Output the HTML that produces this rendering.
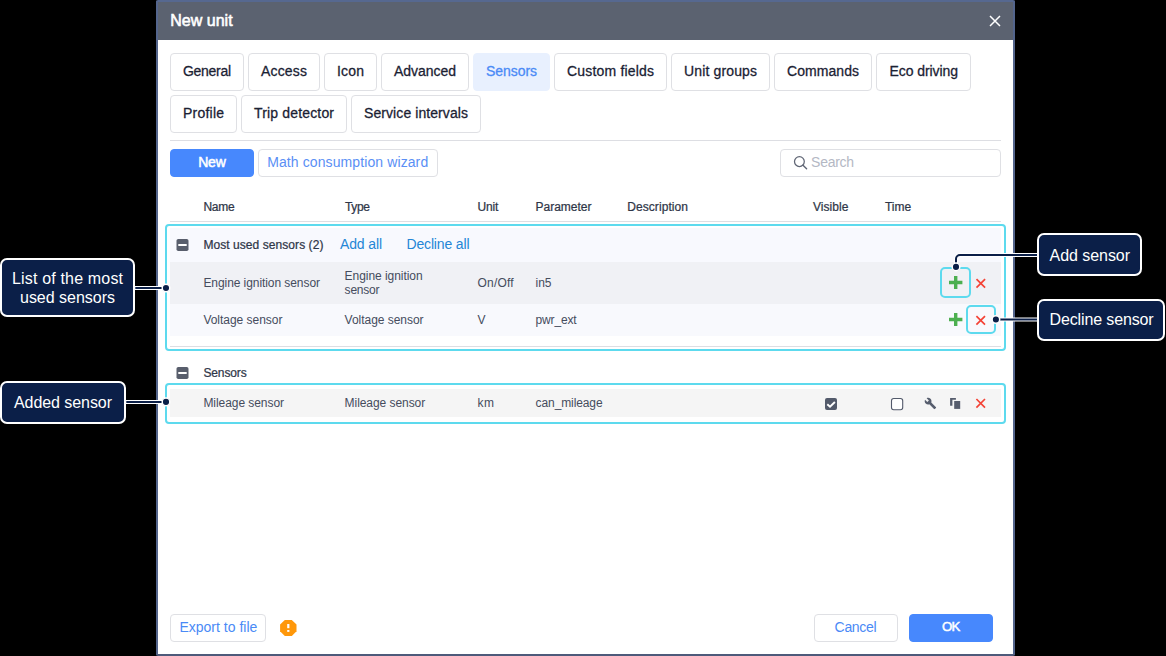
<!DOCTYPE html>
<html><head><meta charset="utf-8"><title>New unit</title>
<style>
html,body{margin:0;padding:0;}
body{width:1166px;height:656px;background:#000;overflow:hidden;position:relative;font-family:"Liberation Sans",sans-serif;}
.a{position:absolute;box-sizing:border-box;}
.t{position:absolute;white-space:nowrap;line-height:20px;font-family:"Liberation Sans",sans-serif;}
#dlg{left:156px;top:0;width:859px;height:656px;border:2px solid #54658c;border-top-color:#566890;border-bottom-color:#4d5a7a;border-radius:2px;background:#fff;}
#hdr{left:158px;top:2px;width:855px;height:38px;background:#5b6270;}
.tab{border:1px solid #dfe0e4;border-radius:4px;background:#fff;height:38px;}
.tab.act{border-color:#e8f0fe;background:#e8f0fe;}
.ln{height:1px;background:#dddee3;left:170px;width:831px;}
.btn{border:1px solid #dfe0e4;border-radius:4px;background:#fff;height:28px;}
.btn.pri{border-color:#4788fd;background:#4788fd;}
.cy{border:2px solid #5ddaee;border-radius:4px;}
.row{left:170px;width:831px;}
.co{background:#0b1f48;border:2px solid #fff;border-radius:7px;}
svg{position:absolute;left:0;top:0;}

</style></head>
<body>
<div class="a" id="dlg"></div>
<div class="a" id="hdr"></div>
<!-- tabs row 1 -->
<div class="a tab" style="left:170px;top:53px;width:74px"></div>
<div class="a tab" style="left:248px;top:53px;width:72px"></div>
<div class="a tab" style="left:324px;top:53px;width:53px"></div>
<div class="a tab" style="left:381px;top:53px;width:88px"></div>
<div class="a tab act" style="left:473px;top:53px;width:77px"></div>
<div class="a tab" style="left:554px;top:53px;width:113px"></div>
<div class="a tab" style="left:671px;top:53px;width:99px"></div>
<div class="a tab" style="left:774px;top:53px;width:98px"></div>
<div class="a tab" style="left:876px;top:53px;width:95px"></div>
<!-- tabs row 2 -->
<div class="a tab" style="left:170px;top:95px;width:67px"></div>
<div class="a tab" style="left:241px;top:95px;width:106px"></div>
<div class="a tab" style="left:351px;top:95px;width:130px"></div>
<div class="a ln" style="top:140px"></div>
<!-- toolbar -->
<div class="a btn pri" style="left:170px;top:149px;width:84px"></div>
<div class="a btn" style="left:258px;top:149px;width:180px"></div>
<div class="a btn" style="left:780px;top:149px;width:221px"></div>
<!-- table -->
<div class="a ln" style="top:221px"></div>
<div class="a row" style="top:228px;height:34px;background:#f8f9fe"></div>
<div class="a row" style="top:262px;height:42px;background:#f0f1f5"></div>
<div class="a row" style="top:304px;height:32px;background:#f8f9fd"></div>
<div class="a ln" style="top:346px"></div>
<div class="a cy" style="left:165px;top:224px;width:841px;height:127px"></div>
<div class="a row" style="top:389px;height:28px;background:#f5f5f5"></div>
<div class="a cy" style="left:165px;top:383px;width:841px;height:41px"></div>
<!-- highlight boxes -->
<div class="a cy" style="left:940px;top:267px;width:31px;height:31px;border-radius:5px"></div>
<div class="a cy" style="left:966px;top:305px;width:30px;height:29px;border-radius:5px"></div>
<!-- footer -->
<div class="a btn" style="left:170px;top:614px;width:96px"></div>
<div class="a btn" style="left:814px;top:614px;width:84px"></div>
<div class="a btn pri" style="left:909px;top:614px;width:84px"></div>
<!-- callouts -->
<div class="a co" style="left:0px;top:257.5px;width:135px;height:59.5px"></div>
<div class="a co" style="left:0px;top:381px;width:126px;height:42.5px"></div>
<div class="a co" style="left:1037px;top:233px;width:105px;height:42.5px"></div>
<div class="a co" style="left:1037px;top:298.5px;width:128px;height:42px"></div>
<svg width="1166" height="656" viewBox="0 0 1166 656">
  <!-- close -->
  <path d="M990 16 L1000 26 M1000 16 L990 26" stroke="#fff" stroke-width="1.5" fill="none"/>
  <!-- search icon -->
  <circle cx="799.4" cy="161.6" r="4.9" fill="none" stroke="#5f6574" stroke-width="1.25"/>
  <path d="M803 165.2 L806.6 168.8" stroke="#5f6574" stroke-width="1.4" stroke-linecap="round"/>
  <!-- minus icons -->
  <rect x="176.5" y="239" width="12" height="12" rx="1.8" fill="#585e6c"/>
  <rect x="178.3" y="244" width="8.4" height="2" fill="#fff"/>
  <rect x="176.5" y="367" width="12" height="12" rx="1.8" fill="#585e6c"/>
  <rect x="178.3" y="372" width="8.4" height="2" fill="#fff"/>
  <!-- plus icons -->
  <path d="M955.7 275.9 V289 M949 282.45 H962.4" stroke="#4caf50" stroke-width="3.4" fill="none"/>
  <path d="M955.7 312.9 V326 M949 319.45 H962.4" stroke="#4caf50" stroke-width="3.4" fill="none"/>
  <!-- red x -->
  <path d="M976.5 279.1 L985.1 287.7 M985.1 279.1 L976.5 287.7" stroke="#f44336" stroke-width="1.7" fill="none"/>
  <path d="M976.4 316.1 L985 324.7 M985 316.1 L976.4 324.7" stroke="#f44336" stroke-width="1.7" fill="none"/>
  <path d="M976.4 399 L985 407.6 M985 399 L976.4 407.6" stroke="#f44336" stroke-width="1.7" fill="none"/>
  <!-- checkboxes -->
  <rect x="825" y="398" width="12" height="12" rx="2" fill="#535a6b"/>
  <path d="M827.3 404.3 L830 406.8 L834.9 402" stroke="#fff" stroke-width="1.9" fill="none"/>
  <rect x="891.5" y="398.5" width="11.2" height="11.2" rx="2.2" fill="#fff" stroke="#535a6b" stroke-width="1.1"/>
  <!-- wrench (material build) -->
  <g transform="translate(924.2,397.3) scale(0.52)" fill="#565d6d"><path d="M22.7 19l-9.100-9.100c.9-2.300.4-5-1.500-6.900-2-2-5-2.400-7.400-1.300L9 6 6 9 1.600 4.700C.4 7.100.9 10.100 2.900 12.100c1.900 1.900 4.600 2.400 6.900 1.500l9.100 9.100c.4.400 1 .4 1.400 0l2.300-2.300c.5-.4.500-1.100.1-1.400z"/></g>
  <!-- copy -->
  <path d="M950.1 405.8 V398 H955.9 V399.8 H952.4 V405.8 Z" fill="#565d6d"/>
  <rect x="954.2" y="401" width="6" height="7.9" fill="#565d6d"/>
  <!-- warning octagon -->
  <path d="M284.8 619.9 H291.8 L296.5 624.6 V631.2 L291.8 635.9 H284.8 L280.1 631.2 V624.6 Z" fill="#ff980a"/>
  <rect x="287.2" y="624" width="2.2" height="4.2" fill="#fff"/>
  <rect x="287.2" y="630" width="2.2" height="1.9" fill="#fff"/>
  <!-- connectors: white outline then navy -->
  <g fill="none" stroke="#fff" stroke-width="4">
    <path d="M135 288 H162"/>
    <path d="M126 402 H162"/>
    <path d="M1037 255 H960 A4 4 0 0 0 956 259 V264"/>
    <path d="M1037 319.5 H999"/>
  </g>
  <g fill="none" stroke="#0b1f48" stroke-width="2">
    <path d="M135.3 288 H164"/>
    <path d="M126.3 402 H164"/>
    <path d="M1037 255 H960 A4 4 0 0 0 956 259 V266"/>
    <path d="M1037 319.5 H997"/>
  </g>
  <g fill="#0b1f48" stroke="#fff" stroke-width="1.5">
    <circle cx="166" cy="288" r="3.8"/>
    <circle cx="166" cy="401.9" r="3.8"/>
    <circle cx="956" cy="266.9" r="3.8"/>
    <circle cx="995.9" cy="319.5" r="3.8"/>
  </g>
</svg>

<!-- text -->
<span class="t" style="left:170.20px;top:11.46px;font-size:16px;color:#fff;-webkit-text-stroke:0.58px;letter-spacing:0.021px;">New unit</span>
<span class="t" style="left:183.00px;top:60.65px;font-size:14px;color:#1a2133;-webkit-text-stroke:0.28px;letter-spacing:-0.302px;">General</span>
<span class="t" style="left:261.00px;top:60.65px;font-size:14px;color:#1a2133;-webkit-text-stroke:0.28px;letter-spacing:0.175px;">Access</span>
<span class="t" style="left:337.00px;top:60.65px;font-size:14px;color:#1a2133;-webkit-text-stroke:0.28px;letter-spacing:0.177px;">Icon</span>
<span class="t" style="left:394.00px;top:60.65px;font-size:14px;color:#1a2133;-webkit-text-stroke:0.28px;letter-spacing:-0.040px;">Advanced</span>
<span class="t" style="left:486.00px;top:60.65px;font-size:14px;color:#4a8af6;-webkit-text-stroke:0.28px;letter-spacing:-0.060px;">Sensors</span>
<span class="t" style="left:567.00px;top:60.65px;font-size:14px;color:#1a2133;-webkit-text-stroke:0.28px;letter-spacing:0.182px;">Custom fields</span>
<span class="t" style="left:684.00px;top:60.65px;font-size:14px;color:#1a2133;-webkit-text-stroke:0.28px;letter-spacing:0.141px;">Unit groups</span>
<span class="t" style="left:787.00px;top:60.65px;font-size:14px;color:#1a2133;-webkit-text-stroke:0.28px;letter-spacing:0.058px;">Commands</span>
<span class="t" style="left:889.50px;top:60.65px;font-size:14px;color:#1a2133;-webkit-text-stroke:0.28px;letter-spacing:-0.077px;">Eco driving</span>
<span class="t" style="left:183.00px;top:103.45px;font-size:14px;color:#1a2133;-webkit-text-stroke:0.28px;letter-spacing:0.219px;">Profile</span>
<span class="t" style="left:254.00px;top:103.45px;font-size:14px;color:#1a2133;-webkit-text-stroke:0.28px;letter-spacing:0.160px;">Trip detector</span>
<span class="t" style="left:364.00px;top:103.45px;font-size:14px;color:#1a2133;-webkit-text-stroke:0.28px;letter-spacing:0.081px;">Service intervals</span>
<span class="t" style="left:198.20px;top:151.95px;font-size:14px;color:#fff;-webkit-text-stroke:0.50px;letter-spacing:-0.208px;">New</span>
<span class="t" style="left:267.20px;top:151.95px;font-size:14px;color:#5a8ff5;letter-spacing:0.102px;">Math consumption wizard</span>
<span class="t" style="left:811.10px;top:152.15px;font-size:14px;color:#b4b8c4;letter-spacing:-0.272px;">Search</span>
<span class="t" style="left:203.40px;top:196.84px;font-size:12px;color:#2f3648;-webkit-text-stroke:0.24px;letter-spacing:-0.272px;">Name</span>
<span class="t" style="left:345.00px;top:196.84px;font-size:12px;color:#2f3648;-webkit-text-stroke:0.24px;letter-spacing:-0.339px;">Type</span>
<span class="t" style="left:477.60px;top:196.84px;font-size:12px;color:#2f3648;-webkit-text-stroke:0.24px;letter-spacing:-0.181px;">Unit</span>
<span class="t" style="left:535.60px;top:196.84px;font-size:12px;color:#2f3648;-webkit-text-stroke:0.24px;letter-spacing:-0.029px;">Parameter</span>
<span class="t" style="left:627.20px;top:196.84px;font-size:12px;color:#2f3648;-webkit-text-stroke:0.24px;letter-spacing:0.077px;">Description</span>
<span class="t" style="left:813.00px;top:196.84px;font-size:12px;color:#2f3648;-webkit-text-stroke:0.24px;letter-spacing:0.043px;">Visible</span>
<span class="t" style="left:885.00px;top:196.84px;font-size:12px;color:#2f3648;-webkit-text-stroke:0.24px;letter-spacing:-0.011px;">Time</span>
<span class="t" style="left:203.40px;top:234.84px;font-size:12px;color:#2f3648;-webkit-text-stroke:0.24px;letter-spacing:0.064px;">Most used sensors (2)</span>
<span class="t" style="left:340.00px;top:234.15px;font-size:14px;color:#2486d6;letter-spacing:-0.135px;">Add all</span>
<span class="t" style="left:406.50px;top:234.15px;font-size:14px;color:#2486d6;letter-spacing:-0.159px;">Decline all</span>
<span class="t" style="left:203.40px;top:272.84px;font-size:12px;color:#454c5d;letter-spacing:-0.070px;">Engine ignition sensor</span>
<span class="t" style="left:344.60px;top:265.84px;font-size:12px;color:#454c5d;letter-spacing:-0.052px;">Engine ignition</span>
<span class="t" style="left:344.60px;top:279.84px;font-size:12px;color:#454c5d;letter-spacing:-0.206px;">sensor</span>
<span class="t" style="left:477.60px;top:272.84px;font-size:12px;color:#454c5d;letter-spacing:0.172px;">On/Off</span>
<span class="t" style="left:535.60px;top:272.84px;font-size:12px;color:#454c5d;letter-spacing:-0.108px;">in5</span>
<span class="t" style="left:203.40px;top:309.84px;font-size:12px;color:#454c5d;letter-spacing:-0.030px;">Voltage sensor</span>
<span class="t" style="left:344.60px;top:309.84px;font-size:12px;color:#454c5d;letter-spacing:-0.030px;">Voltage sensor</span>
<span class="t" style="left:477.60px;top:309.84px;font-size:12px;color:#454c5d;">V</span>
<span class="t" style="left:535.60px;top:309.84px;font-size:12px;color:#454c5d;letter-spacing:-0.172px;">pwr_ext</span>
<span class="t" style="left:203.40px;top:362.84px;font-size:12px;color:#2f3648;-webkit-text-stroke:0.24px;letter-spacing:-0.122px;">Sensors</span>
<span class="t" style="left:203.40px;top:393.14px;font-size:12px;color:#454c5d;letter-spacing:-0.060px;">Mileage sensor</span>
<span class="t" style="left:344.60px;top:393.14px;font-size:12px;color:#454c5d;letter-spacing:-0.060px;">Mileage sensor</span>
<span class="t" style="left:477.60px;top:393.14px;font-size:12px;color:#454c5d;letter-spacing:0.400px;">km</span>
<span class="t" style="left:535.60px;top:393.14px;font-size:12px;color:#454c5d;letter-spacing:-0.105px;">can_mileage</span>
<span class="t" style="left:179.40px;top:617.15px;font-size:14px;color:#4a8af6;letter-spacing:0.013px;">Export to file</span>
<span class="t" style="left:834.60px;top:617.15px;font-size:14px;color:#4a8af6;letter-spacing:-0.319px;">Cancel</span>
<span class="t" style="left:942.00px;top:617.23px;font-size:13.2px;color:#fff;-webkit-text-stroke:0.48px;letter-spacing:-0.762px;">OK</span>
<span class="t" style="left:12.00px;top:268.76px;font-size:16px;color:#fff;letter-spacing:0.167px;">List of the most</span>
<span class="t" style="left:20.00px;top:287.76px;font-size:16px;color:#fff;letter-spacing:-0.016px;">used sensors</span>
<span class="t" style="left:14.00px;top:393.06px;font-size:16px;color:#fff;letter-spacing:-0.067px;">Added sensor</span>
<span class="t" style="left:1049.60px;top:245.66px;font-size:16px;color:#fff;letter-spacing:-0.060px;">Add sensor</span>
<span class="t" style="left:1049.60px;top:309.86px;font-size:16px;color:#fff;letter-spacing:-0.141px;">Decline sensor</span>
</body></html>
